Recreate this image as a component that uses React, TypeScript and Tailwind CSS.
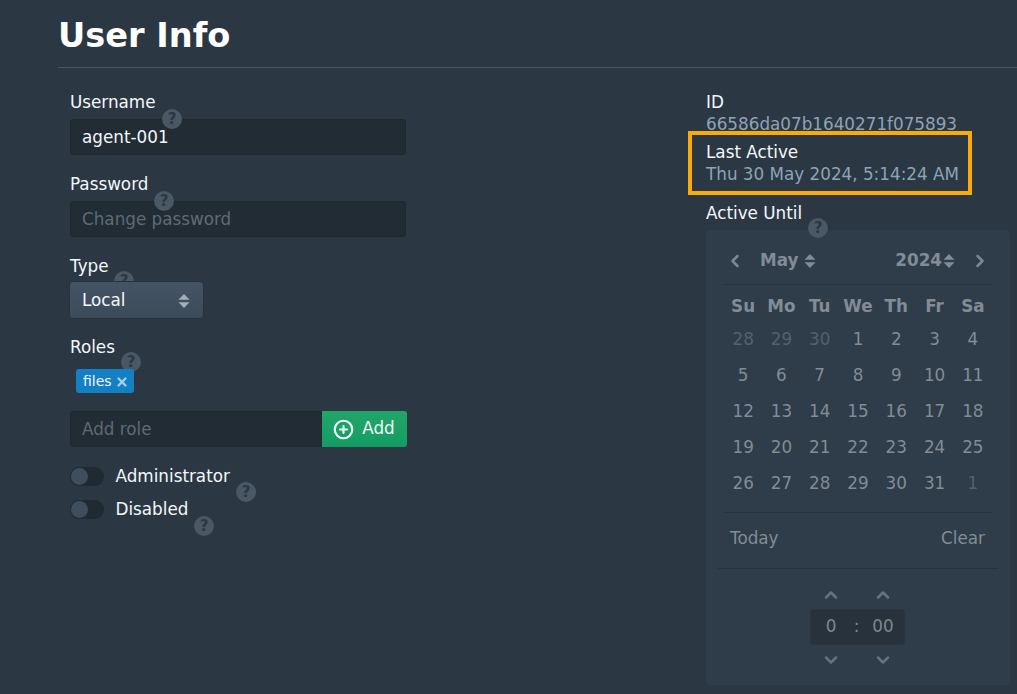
import { ChevronDown, ChevronLeft, ChevronRight, ChevronUp, CirclePlus, X } from "lucide-react";

const FONT = "font-['DejaVu_Sans',sans-serif]";

function Help({ className }: { className: string }) {
  return (
    <span
      className={`absolute z-10 flex h-[20px] w-[20px] items-center justify-center rounded-full bg-[#4a5764] text-[15px] leading-none font-bold text-[#2b3743] ${className}`}
    >
      ?
    </span>
  );
}

function UpDown({ className }: { className: string }) {
  return (
    <svg viewBox="0 0 12 16" className={className} fill="currentColor">
      <path d="M6 1 L11.5 6.8 H0.5 Z" />
      <path d="M6 15 L0.5 9.2 H11.5 Z" />
    </svg>
  );
}

function Toggle() {
  return (
    <span className="flex h-[19px] w-[34px] items-center rounded-full bg-[#202a32] pl-[1px]">
      <span className="h-[17px] w-[17px] rounded-full bg-[#3f4e5d]" />
    </span>
  );
}

const days = [
  ["28", "29", "30", "1", "2", "3", "4"],
  ["5", "6", "7", "8", "9", "10", "11"],
  ["12", "13", "14", "15", "16", "17", "18"],
  ["19", "20", "21", "22", "23", "24", "25"],
  ["26", "27", "28", "29", "30", "31", "1"],
];

function Calendar() {
  return (
    <div className="flex h-[455px] w-[304px] flex-col rounded-[4px] bg-[#2f3c49] text-[#818c97]">
      <div className="mx-[18px] flex h-[55px] items-center border-b border-[#27323c] pt-[7px] font-bold">
        <ChevronLeft className="ml-[1px] h-[20px] w-[20px] text-[#7b8791]" strokeWidth={3} />
        <span className="ml-[15px]">May</span>
        <UpDown className="ml-[6px] h-[16px] w-[12px]" />
        <span className="ml-auto">2024</span>
        <UpDown className="ml-[1px] h-[16px] w-[12px]" />
        <ChevronRight className="ml-[15px] mr-[2px] h-[20px] w-[20px] text-[#7b8791]" strokeWidth={3} />
      </div>
      <div className="mx-[18px] grid grid-cols-7 border-b border-[#27323c] pb-[11px]">
        {["Su", "Mo", "Tu", "We", "Th", "Fr", "Sa"].map((d) => (
          <span key={d} className="flex h-[36px] items-center justify-center pt-[8px] font-bold">
            {d}
          </span>
        ))}
        {days.flatMap((week, w) =>
          week.map((d, i) => {
            const muted = (w === 0 && i < 3) || (w === 4 && i === 6);
            return (
              <span
                key={`${w}-${i}`}
                className={`flex h-[36px] items-center justify-center pt-[2px] ${muted ? "text-[#55616c]" : ""}`}
              >
                {d}
              </span>
            );
          }),
        )}
      </div>
      <div className="mx-[12px] flex h-[56px] items-center justify-between border-b border-[#27323c] pb-[4px] pl-[12px] pr-[13px]">
        <span>Today</span>
        <span>Clear</span>
      </div>
      <div className="flex flex-col items-center pt-[15px]">
        <div className="flex h-[22px] w-[95px] -translate-x-[1px] items-center justify-center gap-[32px] text-[#66727d]">
          <ChevronUp className="h-[20px] w-[20px]" strokeWidth={3} />
          <ChevronUp className="h-[20px] w-[20px]" strokeWidth={3} />
        </div>
        <div className="mt-[3px] flex h-[36px] w-[95px] -translate-x-[1px] items-center rounded-[3px] border border-[#2a353f] bg-[#27323c] text-[#7d8892]">
          <span className="w-[42px] text-center">0</span>
          <span className="w-[10px] text-center">:</span>
          <span className="w-[43px] pl-[1px] text-center">00</span>
        </div>
        <div className="mt-[4px] flex h-[22px] w-[95px] -translate-x-[1px] items-center justify-center gap-[32px] text-[#66727d]">
          <ChevronDown className="h-[20px] w-[20px]" strokeWidth={3} />
          <ChevronDown className="h-[20px] w-[20px]" strokeWidth={3} />
        </div>
      </div>
    </div>
  );
}

export default function App() {
  return (
    <div className={`${FONT} h-[694px] w-[1017px] overflow-hidden bg-[#2b3743] pl-[58px] text-[16.8px] text-[#f4f7fa]`}>
      {/* Header */}
      <header className="h-[68px] border-b border-[#4a5764] pt-[13px]">
        <h1 className="text-[33.6px] leading-[46px] font-bold text-white">User Info</h1>
      </header>

      <div className="flex pl-[12px] pt-[22px]">
        {/* Left form */}
        <div className="flex w-[336px] flex-col">
          <div className="relative">
            <label className="block h-[29px] leading-[24px]">Username</label>
            <Help className="left-[92px] top-[19px]" />
            <div className="flex h-[36px] items-center rounded-[3px] border border-[#1f282f] bg-[#222c34] px-[11px] pt-[1px]">
              agent-001
            </div>
          </div>
          <div className="relative mt-[17px]">
            <label className="block h-[29px] leading-[24px]">Password</label>
            <Help className="left-[84px] top-[19px]" />
            <div className="flex h-[36px] items-center rounded-[3px] border border-[#1f282f] bg-[#222c34] px-[11px] pt-[1px] text-[#5e6b76]">
              Change password
            </div>
          </div>
          <div className="relative mt-[17px]">
            <label className="block h-[27px] leading-[24px]">Type</label>
            <Help className="left-[44px] top-[17px] z-0" />
            <div className="relative z-10 -ml-[1px] flex h-[38px] w-[135px] items-center justify-between rounded-[4px] border border-[#27323c] bg-gradient-to-b from-[#445464] to-[#3c4b5a] pl-[12px] pr-[13px] pt-[1px]">
              Local
              <UpDown className="h-[16px] w-[12px] text-[#a3aeb9]" />
            </div>
          </div>
          <div className="relative mt-[16px]">
            <label className="block h-[24px] leading-[24px]">Roles</label>
            <Help className="left-[51px] top-[17px]" />
            <div className="flex pl-[6px] pt-[10px]">
              <span className="relative z-20 flex h-[24px] w-[58px] items-center rounded-[3px] bg-[#1380c4] pl-[7px] pt-[1px] text-[14px]">
                files
                <X className="ml-[3px] h-[14px] w-[14px] text-[#a9cfe8]" strokeWidth={4} />
              </span>
            </div>
          </div>
          <div className="mt-[18px] flex h-[36px] w-[337px]">
            <div className="flex flex-1 items-center rounded-l-[3px] border border-[#1f282f] bg-[#222c34] px-[11px] pt-[1px] text-[#5e6b76]">
              Add role
            </div>
            <button className="flex w-[85px] items-center justify-center gap-[8px] rounded-r-[3px] bg-gradient-to-b from-[#22a668] to-[#129d63] pr-[1px]">
              <CirclePlus className="h-[21px] w-[21px]" strokeWidth={2.4} />
              Add
            </button>
          </div>
          <div className="relative mt-[20px] flex h-[19px] items-center gap-[11.5px]">
            <Toggle />
            Administrator
            <Help className="left-[166px] top-[15px]" />
          </div>
          <div className="relative mt-[14px] flex h-[19px] items-center gap-[11.5px]">
            <Toggle />
            Disabled
            <Help className="left-[124px] top-[16px]" />
          </div>
        </div>

        {/* Right column */}
        <div className="ml-[300px] flex w-[304px] flex-col pt-[1px]">
          <div className="leading-[22px]">ID</div>
          <div className="leading-[22px] text-[#8fa3b5]">66586da07b1640271f075893</div>
          <div className="relative mt-[6px]">
            <span className="absolute -left-[18px] -top-[10px] h-[64px] w-[284px] border-[4px] border-[#f9ab0a]" />
            <div className="leading-[22px]">Last Active</div>
            <div className="leading-[22px] text-[#8fa3b5]">Thu 30 May 2024, 5:14:24 AM</div>
          </div>
          <div className="relative mt-[17px] leading-[22px]">
            Active Until
            <Help className="left-[102px] top-[16px]" />
          </div>
          <div className="mt-[6px]">
            <Calendar />
          </div>
        </div>
      </div>
    </div>
  );
}
